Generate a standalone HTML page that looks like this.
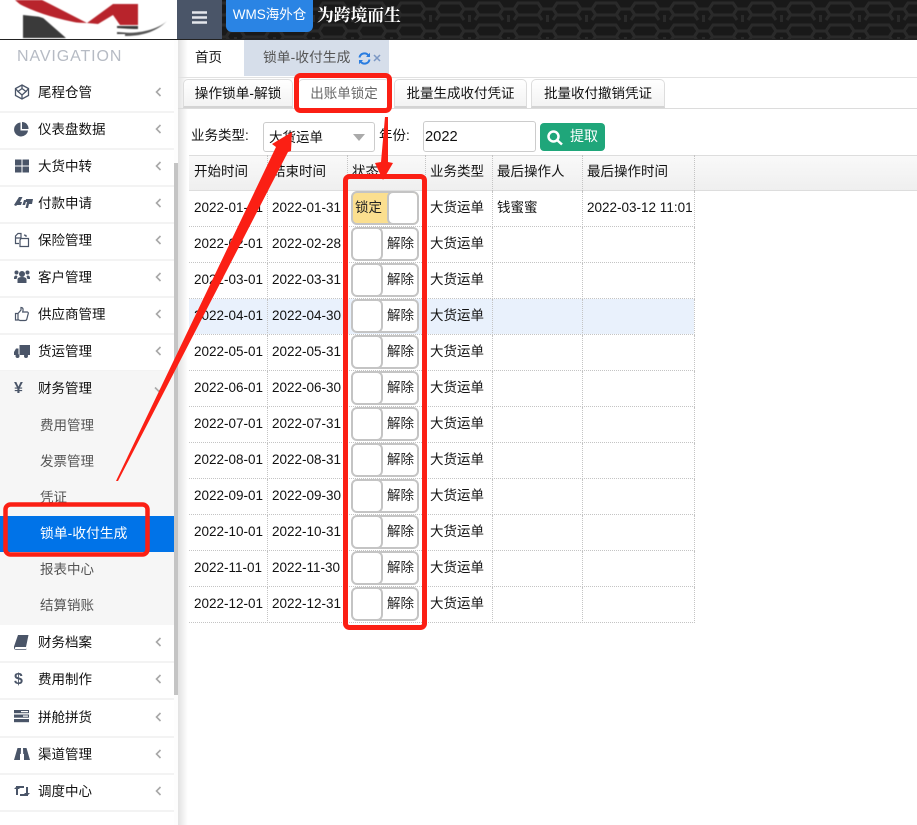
<!DOCTYPE html>
<html lang="zh"><head><meta charset="utf-8">
<style>
*{box-sizing:border-box}
html,body{margin:0;padding:0;width:917px;height:825px;overflow:hidden;background:#fff}
body{font-family:"Liberation Sans","Noto Sans CJK SC",sans-serif;font-size:13px;color:#111;position:relative}
.a{position:absolute;white-space:nowrap}
.mi{position:absolute;left:0;width:174px;height:38px;border-bottom:2px solid #f3f3f3}
.mi span{position:absolute;left:38px;top:9px;font-size:13.5px;line-height:18px;color:#111}
.mi svg.ic{position:absolute;left:14px;top:9px}
.mi svg.ch{position:absolute;left:155px;top:12px}
.si{position:absolute;left:0;width:174px;height:36px;line-height:36px;padding-left:40px;font-size:13.5px;color:#555}
.tab{position:absolute;top:79px;height:29px;background:linear-gradient(#fff,#f3f3f3);border:1px solid #ddd;border-bottom:2px solid #d4d4d4;border-radius:5px 5px 0 0;text-align:center;line-height:28px;font-size:13.5px;color:#111}
.c{position:absolute;height:36px;line-height:34px;font-size:13.5px;color:#111;white-space:nowrap;padding-left:5px;border-bottom:1px dotted #c4c4c4;border-right:1px dotted #c4c4c4;overflow:hidden}
.sw{position:absolute;left:351px;width:68px;height:34px;border:2px solid #c4c4c4;border-radius:6px;background:#fff;overflow:hidden}
.sw i{position:absolute;top:-2px;height:34px;border:2px solid #c4c4c4;border-radius:6px;background:#fff;width:32px}
.sw b{position:absolute;font-weight:400;font-size:13.5px;line-height:29px;top:0;color:#222}
</style></head><body>

<!-- logo -->
<div class="a" style="left:0;top:0;width:177px;height:39px;background:#fff;overflow:hidden">
<svg width="177" height="39" viewBox="0 0 177 39">
<g style="filter:blur(.6px)">
<path d="M23 15L42 17 66 38H23Z" fill="#3a3a3a"/>
<path d="M117 26H138V34H117Z" fill="#3a3a3a"/>
<path d="M15 0H42L50 4 87 23 60 22 30 13Z" fill="#b8242c"/>
<path d="M87 23L113 4H138V25H120L113 15 98 24Z" fill="#b8242c"/>
<path d="M17 5C45 20 95 32 150 31" fill="none" stroke="#fff" stroke-width="4"/>
<path d="M125 33C140 33 157 30 167 21 155 33 140 36 125 36Z" fill="#555"/>
</g>
</svg></div>

<!-- header -->
<svg class="a" style="left:177px;top:0" width="740" height="39">
<defs><pattern id="hx" width="39" height="22" patternUnits="userSpaceOnUse">
<rect width="39" height="22" fill="#191919"/>
<path d="M0 2H10L14 8 10 14H0M39 2H29L25 8 29 14H39M14 8H25M19.500 14V22" transform="translate(0,1)" fill="none" stroke="#2a2a2a" stroke-width="3"/>
<path d="M14 20L10 14M25 20L29 14" fill="none" stroke="#2a2a2a" stroke-width="3"/>
</pattern></defs>
<rect width="740" height="39" fill="url(#hx)"/></svg>
<div class="a" style="left:0;top:39px;width:917px;height:1px;background:#222"></div>
<div class="a" style="left:177px;top:0;width:45px;height:39px;background:#4a5568"></div>
<svg class="a" style="left:192px;top:11px" width="15" height="13"><path d="M0 1.500H15M0 6.500H15M0 11.500H15" stroke="#e4e7ec" stroke-width="2.400"/></svg>
<div class="a" style="left:226px;top:0;width:87px;height:32px;background:#2a84e4;border-radius:0 0 6px 6px;color:#fff;font-size:13.5px;line-height:29px;text-align:center">WMS海外仓</div>
<div class="a" style="left:317px;top:5px;color:#fff;font-size:16.8px;font-weight:700;line-height:22px;font-family:'Liberation Serif','Noto Serif CJK SC',serif">为跨境而生</div>

<!-- sidebar -->
<div class="a" style="left:17px;top:47px;font-size:16px;letter-spacing:.9px;color:#b6bbc4;line-height:19px">NAVIGATION</div>

<div class="mi" style="top:75px"><svg class="ic" width="16" height="16" viewBox="0 0 16 16" fill="none" stroke="#4a5568" stroke-width="1.300"><path d="M8 1L14.500 4.500V11.500L8 15 1.500 11.500V4.500Z"/><path d="M8 4.500L12 7.500 8 11 4 7.500ZM1.500 4.500L4 7.500M14.500 4.500L12 7.500M8 1V4.500M8 11V15"/></svg><span>尾程仓管</span><svg class="ch" width="7" height="10"><path d="M5.500 1L1.500 5 5.500 9" fill="none" stroke="#a8a8a8" stroke-width="1.600"/></svg></div>
<div class="mi" style="top:112px"><svg class="ic" width="16" height="16" viewBox="0 0 16 16"><path d="M6.500 1.500A7 7 0 1 0 14 9.500H6.500Z" fill="#4a5568"/><path d="M8 1A6.500 6.500 0 0 1 14.500 8H8Z" fill="#4a5568"/></svg><span>仪表盘数据</span><svg class="ch" width="7" height="10"><path d="M5.500 1L1.500 5 5.500 9" fill="none" stroke="#a8a8a8" stroke-width="1.600"/></svg></div>
<div class="mi" style="top:149px"><svg class="ic" width="16" height="16" viewBox="0 0 16 16" fill="#4a5568"><rect x="1" y="1.500" width="6.500" height="6"/><rect x="8.500" y="1.500" width="6.500" height="6"/><rect x="1" y="8.500" width="6.500" height="6"/><rect x="8.500" y="8.500" width="6.500" height="6"/></svg><span>大货中转</span><svg class="ch" width="7" height="10"><path d="M5.500 1L1.500 5 5.500 9" fill="none" stroke="#a8a8a8" stroke-width="1.600"/></svg></div>
<div class="mi" style="top:186px"><svg class="ic" width="20" height="16" viewBox="0 0 20 16" fill="#4a5568"><path d="M0 10L5 2H8.500L6 7H8L7 10H3L2 11ZM8.500 10L10 5H12.500L11 10ZM12 4H19L18 9H15L14 13H11.500L13 7H11.500Z"/></svg><span>付款申请</span><svg class="ch" width="7" height="10"><path d="M5.500 1L1.500 5 5.500 9" fill="none" stroke="#a8a8a8" stroke-width="1.600"/></svg></div>
<div class="mi" style="top:223px"><svg class="ic" width="16" height="16" viewBox="0 0 16 16" fill="none" stroke="#4a5568" stroke-width="1.200"><path d="M4 1.500H7V6H1.500V4ZM1.500 6V11.500H5M10 3L12 3.500V5M7 6.500H14.500V14.500H6V8Z"/></svg><span>保险管理</span><svg class="ch" width="7" height="10"><path d="M5.500 1L1.500 5 5.500 9" fill="none" stroke="#a8a8a8" stroke-width="1.600"/></svg></div>
<div class="mi" style="top:260px"><svg class="ic" width="16" height="16" viewBox="0 0 16 16" fill="#4a5568"><circle cx="8" cy="5" r="3"/><circle cx="2.500" cy="3.500" r="2"/><circle cx="13.500" cy="3.500" r="2"/><path d="M3.500 14V10Q4 8 8 8T12.500 10V14ZM0 9Q0 6.500 2.500 6.500L3.500 7.500 2.500 10H0ZM16 9Q16 6.500 13.500 6.500L12.500 7.500 13.500 10H16Z"/></svg><span>客户管理</span><svg class="ch" width="7" height="10"><path d="M5.500 1L1.500 5 5.500 9" fill="none" stroke="#a8a8a8" stroke-width="1.600"/></svg></div>
<div class="mi" style="top:297px"><svg class="ic" width="16" height="16" viewBox="0 0 16 16" fill="none" stroke="#4a5568" stroke-width="1.200"><path d="M1.500 7.500H4V14H1.500ZM4 7.500L7 4V1.500Q9.500 1.500 9 4.500L8.700 6H13.500Q14.800 6.500 14 8.500L12.700 13.500Q12.300 14.500 11 14.500H6L4 13.500"/></svg><span>供应商管理</span><svg class="ch" width="7" height="10"><path d="M5.500 1L1.500 5 5.500 9" fill="none" stroke="#a8a8a8" stroke-width="1.600"/></svg></div>
<div class="mi" style="top:334px"><svg class="ic" width="16" height="16" viewBox="0 0 16 16" fill="#4a5568"><path d="M5.500 2H16V12H5.500ZM4.500 5.500V12H0V9L2 5.500Z"/><circle cx="3.500" cy="13" r="2"/><circle cx="12" cy="13" r="2"/></svg><span>货运管理</span><svg class="ch" width="7" height="10"><path d="M5.500 1L1.500 5 5.500 9" fill="none" stroke="#a8a8a8" stroke-width="1.600"/></svg></div>

<div class="a" style="left:0;top:371px;width:174px;height:254px;background:#f6f6f6"></div>
<div class="mi" style="top:371px;border:0"><div class="a" style="left:14px;top:8px;font-size:16px;font-weight:700;color:#4a5568;line-height:20px">¥</div><span>财务管理</span><svg class="ch" width="10" height="7" style="left:154px;top:15px"><path d="M1 1.500L5 5.500 9 1.500" fill="none" stroke="#a8a8a8" stroke-width="1.600"/></svg></div>
<div class="si" style="top:408px">费用管理</div>
<div class="si" style="top:444px">发票管理</div>
<div class="si" style="top:480px">凭证</div>
<div class="si" style="top:516px;background:#0073e8;color:#fff;font-size:13.8px">锁单-收付生成</div>
<div class="si" style="top:552px">报表中心</div>
<div class="si" style="top:588px">结算销账</div>

<div class="mi" style="top:625px"><svg class="ic" width="16" height="16" viewBox="0 0 16 16" fill="#4a5568"><path d="M4 1H14.500L12 13H2Q.5 13 1 15H11.500L13 14.800 11.800 15.800H2Q-.5 15.500 0 12.500Z"/></svg><span>财务档案</span><svg class="ch" width="7" height="10"><path d="M5.500 1L1.500 5 5.500 9" fill="none" stroke="#a8a8a8" stroke-width="1.600"/></svg></div>
<div class="mi" style="top:662px"><div class="a" style="left:14px;top:8px;font-size:16px;font-weight:700;color:#4a5568;line-height:20px">$</div><span>费用制作</span><svg class="ch" width="7" height="10"><path d="M5.500 1L1.500 5 5.500 9" fill="none" stroke="#a8a8a8" stroke-width="1.600"/></svg></div>
<div class="mi" style="top:700px"><svg class="ic" width="16" height="14" viewBox="0 0 16 14" fill="#4a5568"><rect y="1" width="15" height="3.200"/><rect y="5.500" width="15" height="3.200"/><rect y="10" width="15" height="3.200"/><rect x="9" y="6.500" width="5" height="1.200" fill="#fff"/><rect x="7" y="2" width="7" height="1.200" fill="#fff"/></svg><span>拼舱拼货</span><svg class="ch" width="7" height="10"><path d="M5.500 1L1.500 5 5.500 9" fill="none" stroke="#a8a8a8" stroke-width="1.600"/></svg></div>
<div class="mi" style="top:737px"><svg class="ic" width="16" height="16" viewBox="0 0 16 16" fill="#4a5568"><path d="M3.500 2H7L6.800 8H6V14H0ZM9 2H12.500L16 14H10V8H9.200Z"/></svg><span>渠道管理</span><svg class="ch" width="7" height="10"><path d="M5.500 1L1.500 5 5.500 9" fill="none" stroke="#a8a8a8" stroke-width="1.600"/></svg></div>
<div class="mi" style="top:774px"><svg class="ic" width="16" height="16" viewBox="0 0 16 16" fill="none" stroke="#4a5568" stroke-width="2"><path d="M3 12V4H10M13 4V12H6"/><path d="M0 6L3 3 6 6ZM10 10L13 13 16 10Z" fill="#4a5568" stroke="none"/></svg><span>调度中心</span><svg class="ch" width="7" height="10"><path d="M5.500 1L1.500 5 5.500 9" fill="none" stroke="#a8a8a8" stroke-width="1.600"/></svg></div>

<!-- sidebar scrollbar / shadow -->
<div class="a" style="left:174px;top:40px;width:4px;height:785px;background:#fdfdfd"></div>
<div class="a" style="left:174px;top:163px;width:4px;height:532px;background:#c4c4c4"></div>
<div class="a" style="left:178px;top:40px;width:10px;height:785px;background:linear-gradient(90deg,#e2e2e2,#fff)"></div>

<!-- page tabs -->
<div class="a" style="left:195px;top:49px;font-size:13.5px;line-height:18px;color:#111">首页</div>
<div class="a" style="left:244px;top:40px;width:145px;height:36px;background:#d6deea"></div>
<div class="a" style="left:263px;top:49px;font-size:13.8px;line-height:18px;color:#555">锁单-收付生成</div>
<svg class="a" style="left:358px;top:52px" width="13" height="13" viewBox="0 0 13 13" fill="none" stroke="#2a7de0" stroke-width="2"><path d="M1.500 5.500A5 5 0 0 1 10.500 3.500M11.500 7.500A5 5 0 0 1 2.500 9.500"/><path d="M12 .8V5H8ZM1 12.200V8H5Z" fill="#2a7de0" stroke="none"/></svg>
<svg class="a" style="left:373px;top:54px" width="8" height="8"><path d="M1 1L7 7M7 1L1 7" stroke="#7c98c4" stroke-width="1.500"/></svg>
<div class="a" style="left:178px;top:77px;width:739px;height:1px;background:#e2e2e2"></div>

<!-- sub tabs -->
<div class="a" style="left:178px;top:108px;width:739px;height:1px;background:#dcdcdc"></div>
<div class="tab" style="left:183px;width:110px;font-size:13.7px">操作锁单-解锁</div>
<div class="tab" style="left:298px;width:92px;background:#fff;color:#666;border-bottom:0;height:30px;font-weight:400">出账单锁定</div>
<div class="tab" style="left:394px;width:133px">批量生成收付凭证</div>
<div class="tab" style="left:531px;width:134px">批量收付撤销凭证</div>

<!-- filter -->
<div class="a" style="left:191px;top:126px;font-size:13.5px;line-height:20px">业务类型:</div>
<div class="a" style="left:263px;top:122px;width:112px;height:30px;border:1px solid #ccc;border-radius:3px;padding-left:5px;line-height:29px;font-size:13.5px">大货运单</div>
<div class="a" style="left:353px;top:134px;width:0;height:0;border-left:6px solid transparent;border-right:6px solid transparent;border-top:7px solid #aaa"></div>
<div class="a" style="left:379px;top:126px;font-size:13.5px;line-height:20px">年份:</div>
<div class="a" style="left:423px;top:121px;width:113px;height:31px;border:1px solid #ccc;border-radius:3px;padding-left:1px;line-height:30px;font-size:14.7px">2022</div>
<div class="a" style="left:540px;top:123px;width:65px;height:28px;background:#1fa67a;border-radius:4px"></div>
<svg class="a" style="left:546px;top:129px" width="18" height="17" fill="none" stroke="#fff" stroke-width="2.500"><circle cx="7.500" cy="7.500" r="5"/><path d="M11 11L16 15.500"/></svg>
<div class="a" style="left:570px;top:126px;color:#fff;font-size:14px;line-height:20px">提取</div>

<!-- table -->
<div class="a" style="left:189px;top:155px;width:728px;height:36px;background:linear-gradient(#f9f9f9,#efefef);border-top:1px solid #ddd;border-bottom:1px solid #ddd"></div>
<div id="t"><div class="c" style="left:189px;top:155px;width:79px;border-bottom:0">开始时间</div><div class="c" style="left:267px;top:155px;width:81px;border-bottom:0">结束时间</div><div class="c" style="left:347px;top:155px;width:79px;border-bottom:0">状态</div><div class="c" style="left:425px;top:155px;width:68px;border-bottom:0">业务类型</div><div class="c" style="left:492px;top:155px;width:91px;border-bottom:0">最后操作人</div><div class="c" style="left:582px;top:155px;width:113px;border-bottom:0">最后操作时间</div>

<div class="a" style="left:189px;top:299px;width:505px;height:35px;background:#e9f1fc"></div>

<div class="c" style="left:189px;top:191px;width:79px">2022-01-01</div><div class="c" style="left:267px;top:191px;width:81px">2022-01-31</div><div class="c" style="left:347px;top:191px;width:79px"></div><div class="c" style="left:425px;top:191px;width:68px">大货运单</div><div class="c" style="left:492px;top:191px;width:91px">钱蜜蜜</div><div class="c" style="left:582px;top:191px;width:113px">2022-03-12 11:01</div>
<div class="c" style="left:189px;top:227px;width:79px">2022-02-01</div><div class="c" style="left:267px;top:227px;width:81px">2022-02-28</div><div class="c" style="left:347px;top:227px;width:79px"></div><div class="c" style="left:425px;top:227px;width:68px">大货运单</div><div class="c" style="left:492px;top:227px;width:91px"></div><div class="c" style="left:582px;top:227px;width:113px"></div>
<div class="c" style="left:189px;top:263px;width:79px">2022-03-01</div><div class="c" style="left:267px;top:263px;width:81px">2022-03-31</div><div class="c" style="left:347px;top:263px;width:79px"></div><div class="c" style="left:425px;top:263px;width:68px">大货运单</div><div class="c" style="left:492px;top:263px;width:91px"></div><div class="c" style="left:582px;top:263px;width:113px"></div>
<div class="c" style="left:189px;top:299px;width:79px">2022-04-01</div><div class="c" style="left:267px;top:299px;width:81px">2022-04-30</div><div class="c" style="left:347px;top:299px;width:79px"></div><div class="c" style="left:425px;top:299px;width:68px">大货运单</div><div class="c" style="left:492px;top:299px;width:91px"></div><div class="c" style="left:582px;top:299px;width:113px"></div>
<div class="c" style="left:189px;top:335px;width:79px">2022-05-01</div><div class="c" style="left:267px;top:335px;width:81px">2022-05-31</div><div class="c" style="left:347px;top:335px;width:79px"></div><div class="c" style="left:425px;top:335px;width:68px">大货运单</div><div class="c" style="left:492px;top:335px;width:91px"></div><div class="c" style="left:582px;top:335px;width:113px"></div>
<div class="c" style="left:189px;top:371px;width:79px">2022-06-01</div><div class="c" style="left:267px;top:371px;width:81px">2022-06-30</div><div class="c" style="left:347px;top:371px;width:79px"></div><div class="c" style="left:425px;top:371px;width:68px">大货运单</div><div class="c" style="left:492px;top:371px;width:91px"></div><div class="c" style="left:582px;top:371px;width:113px"></div>
<div class="c" style="left:189px;top:407px;width:79px">2022-07-01</div><div class="c" style="left:267px;top:407px;width:81px">2022-07-31</div><div class="c" style="left:347px;top:407px;width:79px"></div><div class="c" style="left:425px;top:407px;width:68px">大货运单</div><div class="c" style="left:492px;top:407px;width:91px"></div><div class="c" style="left:582px;top:407px;width:113px"></div>
<div class="c" style="left:189px;top:443px;width:79px">2022-08-01</div><div class="c" style="left:267px;top:443px;width:81px">2022-08-31</div><div class="c" style="left:347px;top:443px;width:79px"></div><div class="c" style="left:425px;top:443px;width:68px">大货运单</div><div class="c" style="left:492px;top:443px;width:91px"></div><div class="c" style="left:582px;top:443px;width:113px"></div>
<div class="c" style="left:189px;top:479px;width:79px">2022-09-01</div><div class="c" style="left:267px;top:479px;width:81px">2022-09-30</div><div class="c" style="left:347px;top:479px;width:79px"></div><div class="c" style="left:425px;top:479px;width:68px">大货运单</div><div class="c" style="left:492px;top:479px;width:91px"></div><div class="c" style="left:582px;top:479px;width:113px"></div>
<div class="c" style="left:189px;top:515px;width:79px">2022-10-01</div><div class="c" style="left:267px;top:515px;width:81px">2022-10-31</div><div class="c" style="left:347px;top:515px;width:79px"></div><div class="c" style="left:425px;top:515px;width:68px">大货运单</div><div class="c" style="left:492px;top:515px;width:91px"></div><div class="c" style="left:582px;top:515px;width:113px"></div>
<div class="c" style="left:189px;top:551px;width:79px">2022-11-01</div><div class="c" style="left:267px;top:551px;width:81px">2022-11-30</div><div class="c" style="left:347px;top:551px;width:79px"></div><div class="c" style="left:425px;top:551px;width:68px">大货运单</div><div class="c" style="left:492px;top:551px;width:91px"></div><div class="c" style="left:582px;top:551px;width:113px"></div>
<div class="c" style="left:189px;top:587px;width:79px">2022-12-01</div><div class="c" style="left:267px;top:587px;width:81px">2022-12-31</div><div class="c" style="left:347px;top:587px;width:79px"></div><div class="c" style="left:425px;top:587px;width:68px">大货运单</div><div class="c" style="left:492px;top:587px;width:91px"></div><div class="c" style="left:582px;top:587px;width:113px"></div>
</div>

<!-- switches -->
<div class="sw" style="top:191px;background:#fbdf8f"><b style="left:2px">锁定</b><i style="left:34px"></i></div>
<div class="sw" style="top:227px"><i style="left:-2px"></i><b style="left:34px">解除</b></div>
<div class="sw" style="top:263px"><i style="left:-2px"></i><b style="left:34px">解除</b></div>
<div class="sw" style="top:299px"><i style="left:-2px"></i><b style="left:34px">解除</b></div>
<div class="sw" style="top:335px"><i style="left:-2px"></i><b style="left:34px">解除</b></div>
<div class="sw" style="top:371px"><i style="left:-2px"></i><b style="left:34px">解除</b></div>
<div class="sw" style="top:407px"><i style="left:-2px"></i><b style="left:34px">解除</b></div>
<div class="sw" style="top:443px"><i style="left:-2px"></i><b style="left:34px">解除</b></div>
<div class="sw" style="top:479px"><i style="left:-2px"></i><b style="left:34px">解除</b></div>
<div class="sw" style="top:515px"><i style="left:-2px"></i><b style="left:34px">解除</b></div>
<div class="sw" style="top:551px"><i style="left:-2px"></i><b style="left:34px">解除</b></div>
<div class="sw" style="top:587px"><i style="left:-2px"></i><b style="left:34px">解除</b></div>

<!-- red annotations -->
<svg class="a" style="left:0;top:0;pointer-events:none" width="917" height="825" fill="none">
<rect x="296.500" y="75.500" width="93" height="35" rx="4" stroke="#fb1f14" stroke-width="5"/>
<rect x="345.500" y="176.500" width="79" height="451" rx="4" stroke="#fb1f14" stroke-width="5"/>
<rect x="5.500" y="504.500" width="142" height="50" rx="5" stroke="#fb1f14" stroke-width="4.500"/>
<polygon fill="#fb1f14" points="116,481 276,147 272,144 292,132 291,151 288,152 118,481"/>
<polygon fill="#fb1f14" points="385,117 388,117 388,162 393,163 383,180 375,163 381,162"/>
</svg>
</body></html>
